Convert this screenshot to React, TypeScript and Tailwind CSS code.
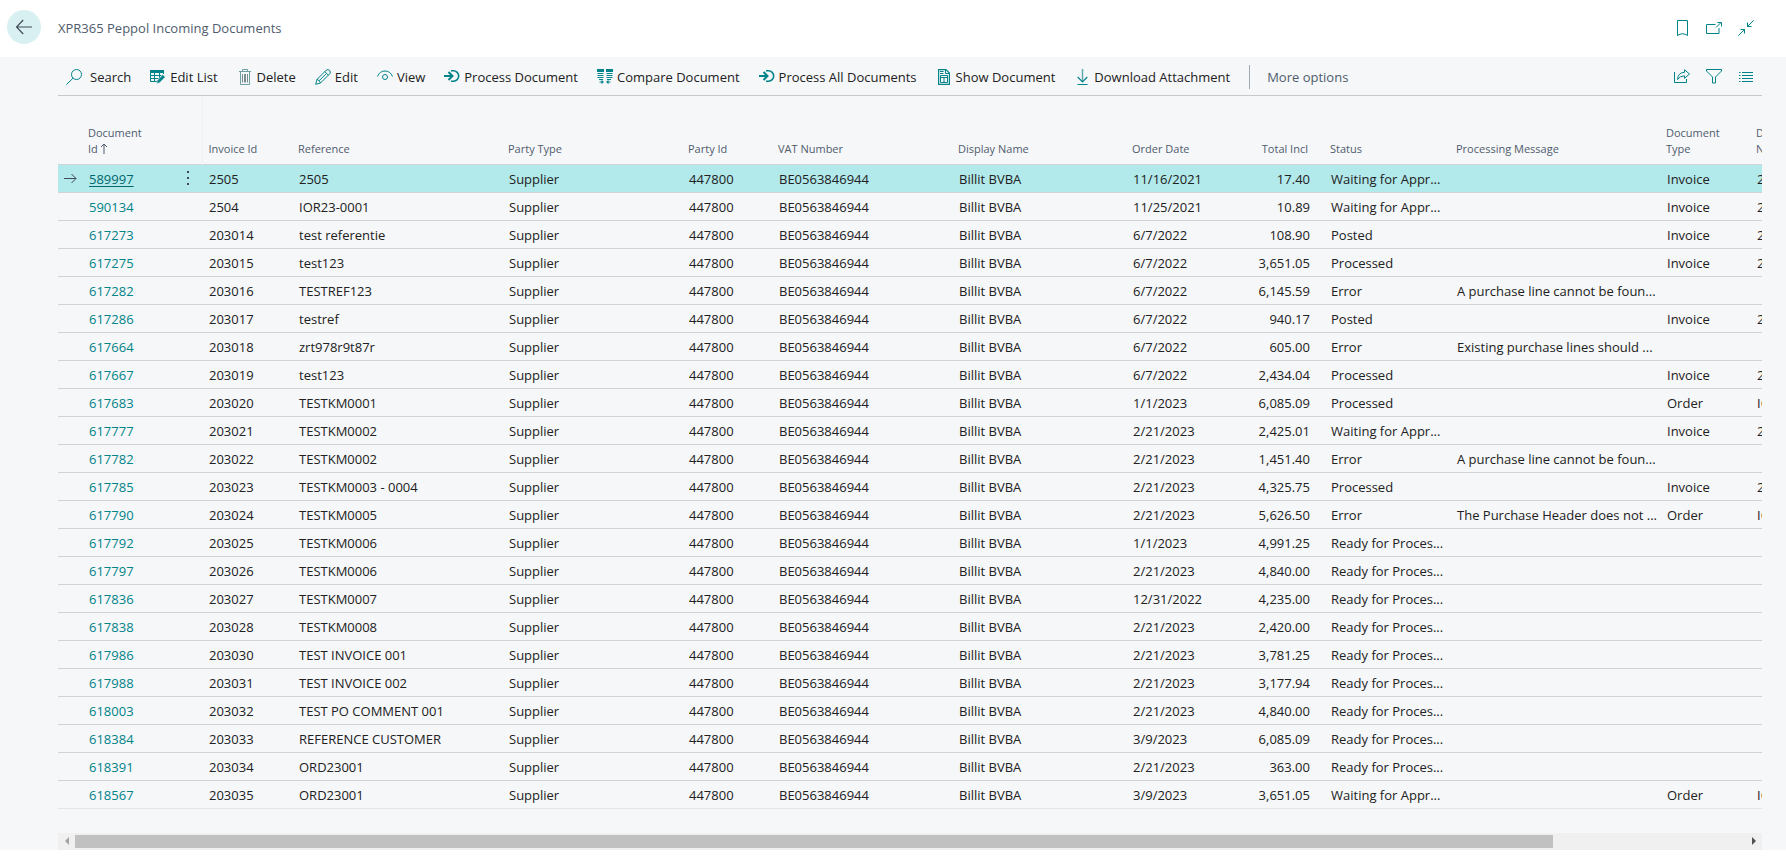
import React from "react";
import clsx from "clsx";

interface IncomingDocument {
    id: string;
    invoiceId: string;
    reference: string;
    orderDate: string;
    total: string;
    status: string;
    message?: string;
    documentType?: string;
    documentNo?: string;
}

const WAITING = "Waiting for Appr...";
const READY = "Ready for Proces...";
const NO_LINE = "A purchase line cannot be foun...";

const documents: IncomingDocument[] = [
    { id: "589997", invoiceId: "2505", reference: "2505", orderDate: "11/16/2021", total: "17.40", status: WAITING, documentType: "Invoice", documentNo: "2505" },
    { id: "590134", invoiceId: "2504", reference: "IOR23-0001", orderDate: "11/25/2021", total: "10.89", status: WAITING, documentType: "Invoice", documentNo: "2504" },
    { id: "617273", invoiceId: "203014", reference: "test referentie", orderDate: "6/7/2022", total: "108.90", status: "Posted", documentType: "Invoice", documentNo: "203014" },
    { id: "617275", invoiceId: "203015", reference: "test123", orderDate: "6/7/2022", total: "3,651.05", status: "Processed", documentType: "Invoice", documentNo: "203015" },
    { id: "617282", invoiceId: "203016", reference: "TESTREF123", orderDate: "6/7/2022", total: "6,145.59", status: "Error", message: NO_LINE },
    { id: "617286", invoiceId: "203017", reference: "testref", orderDate: "6/7/2022", total: "940.17", status: "Posted", documentType: "Invoice", documentNo: "203017" },
    { id: "617664", invoiceId: "203018", reference: "zrt978r9t87r", orderDate: "6/7/2022", total: "605.00", status: "Error", message: "Existing purchase lines should ..." },
    { id: "617667", invoiceId: "203019", reference: "test123", orderDate: "6/7/2022", total: "2,434.04", status: "Processed", documentType: "Invoice", documentNo: "203019" },
    { id: "617683", invoiceId: "203020", reference: "TESTKM0001", orderDate: "1/1/2023", total: "6,085.09", status: "Processed", documentType: "Order", documentNo: "IOR23" },
    { id: "617777", invoiceId: "203021", reference: "TESTKM0002", orderDate: "2/21/2023", total: "2,425.01", status: WAITING, documentType: "Invoice", documentNo: "203021" },
    { id: "617782", invoiceId: "203022", reference: "TESTKM0002", orderDate: "2/21/2023", total: "1,451.40", status: "Error", message: NO_LINE },
    { id: "617785", invoiceId: "203023", reference: "TESTKM0003 - 0004", orderDate: "2/21/2023", total: "4,325.75", status: "Processed", documentType: "Invoice", documentNo: "203023" },
    { id: "617790", invoiceId: "203024", reference: "TESTKM0005", orderDate: "2/21/2023", total: "5,626.50", status: "Error", message: "The Purchase Header does not ...", documentType: "Order", documentNo: "IOR23" },
    { id: "617792", invoiceId: "203025", reference: "TESTKM0006", orderDate: "1/1/2023", total: "4,991.25", status: READY },
    { id: "617797", invoiceId: "203026", reference: "TESTKM0006", orderDate: "2/21/2023", total: "4,840.00", status: READY },
    { id: "617836", invoiceId: "203027", reference: "TESTKM0007", orderDate: "12/31/2022", total: "4,235.00", status: READY },
    { id: "617838", invoiceId: "203028", reference: "TESTKM0008", orderDate: "2/21/2023", total: "2,420.00", status: READY },
    { id: "617986", invoiceId: "203030", reference: "TEST INVOICE 001", orderDate: "2/21/2023", total: "3,781.25", status: READY },
    { id: "617988", invoiceId: "203031", reference: "TEST INVOICE 002", orderDate: "2/21/2023", total: "3,177.94", status: READY },
    { id: "618003", invoiceId: "203032", reference: "TEST PO COMMENT 001", orderDate: "2/21/2023", total: "4,840.00", status: READY },
    { id: "618384", invoiceId: "203033", reference: "REFERENCE CUSTOMER", orderDate: "3/9/2023", total: "6,085.09", status: READY },
    { id: "618391", invoiceId: "203034", reference: "ORD23001", orderDate: "2/21/2023", total: "363.00", status: READY },
    { id: "618567", invoiceId: "203035", reference: "ORD23001", orderDate: "3/9/2023", total: "3,651.05", status: WAITING, documentType: "Order", documentNo: "IOR23" },
];

function Icon({ children, className }: { children: React.ReactNode; className?: string }) {
    return (
        <svg
            viewBox="0 0 16 16"
            fill="none"
            stroke="currentColor"
            aria-hidden="true"
            className={clsx("size-4 shrink-0", className)}
        >
            {children}
        </svg>
    );
}

const SearchIcon = () => (
    <Icon>
        <circle cx="10.5" cy="5.5" r="5" />
        <path d="M7 9.2 0.4 15.6" />
    </Icon>
);

const EditListIcon = () => (
    <Icon>
        <path d="M0 1h14v3H0z" fill="currentColor" stroke="none" />
        <path d="M.5 2v10.5H7M.5 6.5h11M.5 9.5h8M4.5 3v9.5M9.5 3v6M13.5 2v3" />
        <path d="M6.5 14.5 7.3 11.3 12.8 5.6 15.3 8.1 9.7 13.7z" fill="currentColor" stroke="#f6f7f9" strokeWidth=".6" />
    </Icon>
);

const DeleteIcon = () => (
    <Icon>
        <path d="M5.5 2.5v-2h5v2M2 2.5h12" stroke="#6f9fa3" />
        <path d="M3.5 3v12.5h9V3" stroke="#6f9fa3" />
        <path d="M5.5 5v8.5M7.5 5v8.5M8.5 5v8.5M10.5 5v8.5" stroke="#5d7078" strokeWidth=".8" />
    </Icon>
);

const EditIcon = () => (
    <Icon>
        <path d="M.7 15.3 2 10.4 11.3 1.1Q13 -.2 14.6 1.4 16.1 3 14.8 4.7L5.5 14z" />
        <path d="M2 10.4Q4.6 11 5.5 14M9.8 2.6l3.6 3.6M11.2 4.7 4.2 11.7" />
    </Icon>
);

const ViewIcon = () => (
    <Icon>
        <path d="M.5 7.5Q2.6 2 8 2t7.5 5.5" />
        <circle cx="8" cy="8" r="2.5" />
    </Icon>
);

const ProcessIcon = () => (
    <Icon>
        <path d="M0 7h8" strokeWidth="2" />
        <path d="m4.5 3 4 4-4 4" strokeWidth="2" />
        <path d="M7 1.8h2.5a5.2 5.2 0 0 1 0 10.4H7" strokeWidth="1.6" />
    </Icon>
);

const CompareIcon = () => (
    <Icon>
        <path d="M0 0h7v3H0zM9 0h7v3H9z" fill="currentColor" stroke="none" />
        <path d="M.5 4.5h6M.5 6.5h6M.5 8.5h6M2 10.5h4M9.5 4.5h6M9.5 6.5h6M9.5 8.5h6M10 10.5h4" />
        <path d="M2.5 13h3M10.5 13h3" strokeWidth="1.2" />
        <path d="m4.5 10.8 2.4 2.2-2.4 2.2zM11.5 10.8 9.1 13l2.4 2.2z" fill="currentColor" stroke="none" />
    </Icon>
);

const ShowDocumentIcon = () => (
    <Icon>
        <path d="M2.6.6h7.4l3.4 3.4v11.4H2.6z" strokeWidth="1.2" />
        <path d="M9.5.5v4h4M4 2.5h3.5M4 4.5h3.5" />
        <path d="M4.5 6.5h7v7h-7zM4.5 8.5h7M8 8v5.5" />
    </Icon>
);

const DownloadIcon = () => (
    <Icon>
        <path d="M8.5 0v12" stroke="#5fa9ad" strokeWidth="1.5" />
        <path d="m3.7 8 4.8 4.8L13.3 8" strokeWidth="1.2" />
        <path d="M3.5 15.5h10" />
    </Icon>
);

const actions = [
    { label: "Search", icon: SearchIcon, wide: true },
    { label: "Edit List", icon: EditListIcon },
    { label: "Delete", icon: DeleteIcon },
    { label: "Edit", icon: EditIcon },
    { label: "View", icon: ViewIcon },
    { label: "Process Document", icon: ProcessIcon },
    { label: "Compare Document", icon: CompareIcon },
    { label: "Process All Documents", icon: ProcessIcon },
    { label: "Show Document", icon: ShowDocumentIcon },
    { label: "Download Attachment", icon: DownloadIcon },
];

function PageHeader() {
    return (
        <header className="flex h-[57px] items-center bg-white pb-0.5 pl-[7px] pr-8">
            <button
                type="button"
                aria-label="Back"
                className="mb-0.5 flex size-[34px] items-center justify-center rounded-full bg-[#d9f0f2] text-[#404a54]"
            >
                <Icon>
                    <path d="M0 8h16M7.2 1 .5 8l6.7 7" strokeWidth="1.2" />
                </Icon>
            </button>
            <h1 className="ml-[17px] text-[#505c6d]">XPR365 Peppol Incoming Documents</h1>
            <div className="ml-auto flex gap-4 text-[#008489]">
                <button type="button" aria-label="Bookmark">
                    <Icon>
                        <path d="M3.5.5h10v15Q8.5 12 3.5 15.5z" />
                    </Icon>
                </button>
                <button type="button" aria-label="Open in new window">
                    <Icon>
                        <path d="M9.5 4.5H.5v9h12.5V8M10 7.5l5-5M11.5 2.5h4v4" />
                    </Icon>
                </button>
                <button type="button" aria-label="Collapse">
                    <Icon>
                        <path d="M15.7.3 9.5 6.5M9.5 2.5v4h4M.3 15.7 6.5 9.5M2.5 9.5h4v4" />
                    </Icon>
                </button>
            </div>
        </header>
    );
}

function ActionBar() {
    return (
        <div className="flex h-[39px] items-center border-b border-[#c5c9ce] px-2 pt-px">
            <div className="flex items-center gap-[19px]">
                {actions.map(({ label, icon: ActionIcon, wide }) => (
                    <button
                        key={label}
                        type="button"
                        className={clsx("flex items-center whitespace-nowrap text-[#212121]", wide ? "gap-2" : "gap-1")}
                    >
                        <span className="text-[#008489]">
                            <ActionIcon />
                        </span>
                        {label}
                    </button>
                ))}
            </div>
            <button
                type="button"
                className="ml-[19px] h-6 whitespace-nowrap border-l border-[#a0a8b2] pl-[17px] text-[#505c6d]"
            >
                More options
            </button>
            <div className="ml-auto flex gap-4 text-[#008489]">
                <button type="button" aria-label="Share">
                    <Icon>
                        <path d="M.5 3v10.5h12V10" />
                        <path d="M10.5.8 15.5 5 10.5 9.3V6.8Q6 6.8 3.5 10.5 4 3.5 10.5 3.3z" />
                    </Icon>
                </button>
                <button type="button" aria-label="Filter">
                    <Icon>
                        <path d="M.5.5h15V2L9.5 8v6h-3V8L.5 2z" />
                    </Icon>
                </button>
                <button type="button" aria-label="Show as list">
                    <Icon>
                        <path d="M1 3.5h1.5M1 6.5h1.5M1 9.5h1.5M1 12.5h1.5M4 3.5h11M4 6.5h11M4 9.5h11M4 12.5h11" />
                    </Icon>
                </button>
            </div>
        </div>
    );
}

const headCell = "pl-1.5 pb-[7px] align-bottom text-left text-[11px] leading-4 font-normal text-[#505c6d]";
const cell = "pt-0.5 pl-[7px] whitespace-nowrap";

function DocumentTable() {
    return (
        <div className="overflow-hidden">
            <table className="w-[1782px] table-fixed border-collapse text-[#212121]">
                <colgroup>
                    <col className="w-6" />
                    <col className="w-[91px]" />
                    <col className="w-[29px]" />
                    <col className="w-[90px]" />
                    <col className="w-[210px]" />
                    <col className="w-[180px]" />
                    <col className="w-[90px]" />
                    <col className="w-[180px]" />
                    <col className="w-[174px]" />
                    <col className="w-[110px]" />
                    <col className="w-[88px]" />
                    <col className="w-[126px]" />
                    <col className="w-[210px]" />
                    <col className="w-[90px]" />
                    <col className="w-[90px]" />
                </colgroup>
                <thead>
                    <tr className="h-[68px] border-b border-[#d0d3d8]">
                        <td />
                        <th className={headCell}>
                            Document
                            <br />
                            Id
                            <svg viewBox="0 0 8 11" fill="none" stroke="currentColor" aria-hidden="true" className="ml-0.5 inline h-[11px] w-2 align-[-1px]">
                                <path d="M4 11V1M1 4l3-3 3 3" />
                            </svg>
                        </th>
                        <td className="border-r border-[#eff0f3]" />
                        <th className={headCell}>Invoice Id</th>
                        <th className={headCell}>Reference</th>
                        <th className={headCell}>Party Type</th>
                        <th className={headCell}>Party Id</th>
                        <th className={headCell}>VAT Number</th>
                        <th className={headCell}>Display Name</th>
                        <th className={headCell}>Order Date</th>
                        <th className={clsx(headCell, "pr-4 text-right")}>Total Incl</th>
                        <th className={headCell}>Status</th>
                        <th className={headCell}>Processing Message</th>
                        <th className={headCell}>
                            Document
                            <br />
                            Type
                        </th>
                        <th className={headCell}>
                            Document
                            <br />
                            No.
                        </th>
                    </tr>
                </thead>
                <tbody>
                    {documents.map((doc, index) => {
                        const selected = index === 0;
                        return (
                            <tr
                                key={doc.id}
                                className={clsx("h-7 border-b border-[#d0d3d8] last:border-[#e3e5e8]", selected && "bg-[#b2e9eb]")}
                            >
                                <td className="pl-1.5">
                                    {selected && (
                                        <svg viewBox="0 0 13 11" fill="none" stroke="currentColor" aria-hidden="true" className="h-[11px] w-[13px] text-[#404a54]">
                                            <path d="M0 5.5h12M7.5 1l4.5 4.5L7.5 10" />
                                        </svg>
                                    )}
                                </td>
                                <td className={cell}>
                                    <a href="#" className={selected ? "text-[#00686d] underline underline-offset-2" : "text-[#008489]"}>
                                        {doc.id}
                                    </a>
                                </td>
                                <td className="pl-[13px]">
                                    {selected && (
                                        <button type="button" aria-label="Row options" className="block text-[#404a54]">
                                            <svg viewBox="0 0 4 14" fill="currentColor" className="h-3.5 w-1">
                                                <path d="M1 0h2v2H1zM1 6h2v2H1zM1 12h2v2H1z" />
                                            </svg>
                                        </button>
                                    )}
                                </td>
                                <td className={cell}>{doc.invoiceId}</td>
                                <td className={cell}>{doc.reference}</td>
                                <td className={cell}>Supplier</td>
                                <td className={cell}>447800</td>
                                <td className={cell}>BE0563846944</td>
                                <td className={cell}>Billit BVBA</td>
                                <td className={cell}>{doc.orderDate}</td>
                                <td className={clsx(cell, "pr-3.5 text-right")}>{doc.total}</td>
                                <td className={cell}>{doc.status}</td>
                                <td className={cell}>{doc.message}</td>
                                <td className={cell}>{doc.documentType}</td>
                                <td className={cell}>{doc.documentNo}</td>
                            </tr>
                        );
                    })}
                </tbody>
            </table>
        </div>
    );
}

function HorizontalScrollbar() {
    return (
        <div className="mt-6 flex h-[17px] items-center bg-[#f0f0f0]">
            <button type="button" aria-label="Scroll left" className="flex w-[17px] justify-center text-[#a3a3a3]">
                <svg viewBox="0 0 4 8" fill="currentColor" className="h-2 w-1">
                    <path d="M4 0v8L0 4z" />
                </svg>
            </button>
            <div className="flex-1 pr-48">
                <div className="h-[13px] bg-[#c1c1c1]" />
            </div>
            <button type="button" aria-label="Scroll right" className="flex w-[17px] justify-center text-[#505050]">
                <svg viewBox="0 0 4 8" fill="currentColor" className="h-2 w-1">
                    <path d="M0 0v8l4-4z" />
                </svg>
            </button>
        </div>
    );
}

export default function App() {
    return (
        <div className="min-h-screen bg-white font-['Open_Sans',sans-serif] text-[13px] leading-5">
            <PageHeader />
            <main className="bg-[#f6f7f9] pl-[58px] pr-6">
                <ActionBar />
                <DocumentTable />
                <HorizontalScrollbar />
            </main>
        </div>
    );
}
